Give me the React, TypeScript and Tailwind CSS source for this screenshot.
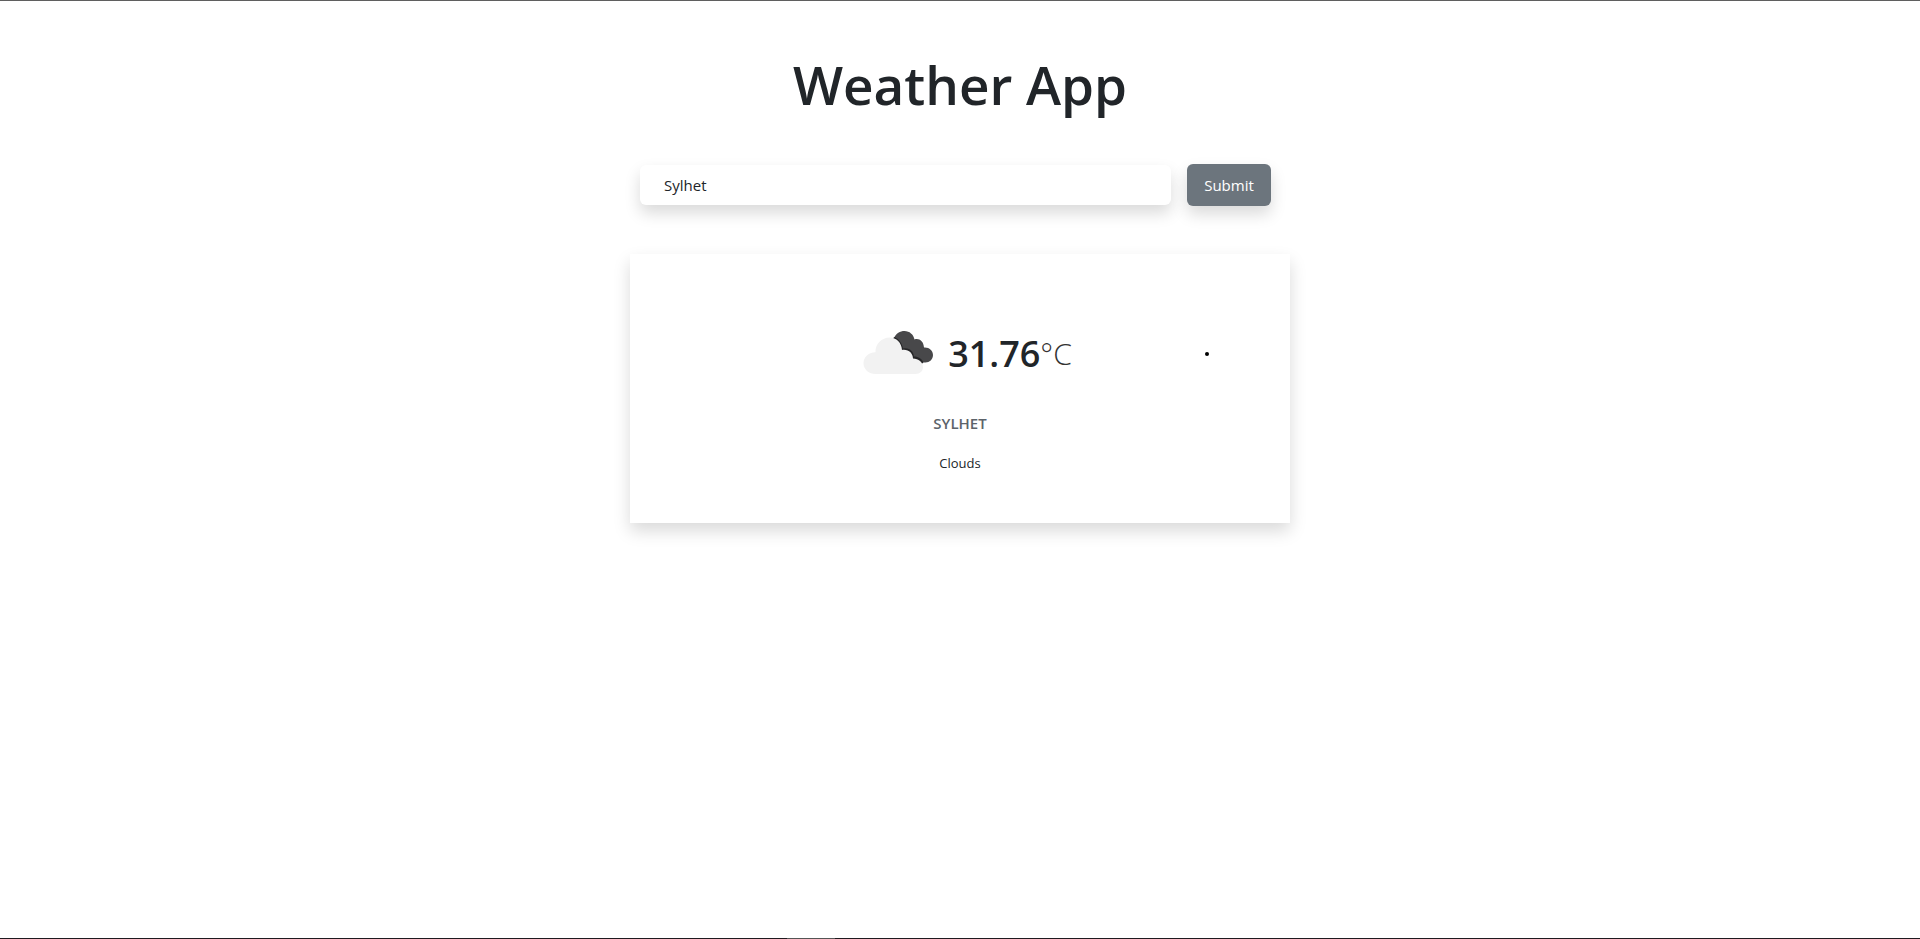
import { useState } from "react";
import type { FormEvent } from "react";

function CloudsIcon() {
  return (
    <svg viewBox="-1 0 100 100" className="size-[100px] shrink-0" role="img" aria-label="Clouds">
      <path
        d="M45 34C47 29.500 51 27 55.500 27C60.500 27 64.500 30.500 65.500 35.500C70 34 74.500 37 75 43.500C80 43 84 46.500 84 51C84 55.500 80.500 58.500 76.500 58.500C74.500 58.500 73 58 72 57.500L50 46Z"
        fill="#48484a"
      />
      <path
        d="M45 33C50 35 53 39 54 44.500C60 43 64.500 47 65 52.500C69.500 52.500 73 55 74.500 58.500L70 62L40 44Z"
        fill="#262628"
      />
      <path
        d="M26.500 70C20 70 14.500 65.200 14.500 59.500C14.500 53.500 19 48.500 26.500 48.300C26 40 33 33.500 40.500 33.500C47.500 33.500 52.500 38.500 53 46C59.500 45 64 49.500 64 54.500C69.500 54.500 74 58.500 74 63C74 67 71 70 66.500 70Z"
        fill="#f2f2f2"
      />
    </svg>
  );
}

export default function App() {
  const [city, setCity] = useState("Sylhet");
  const onSubmit = (event: FormEvent) => event.preventDefault();

  return (
    <div className="flex min-h-screen flex-col border-t border-[#5f5f5f] bg-white font-['Open_Sans','Noto_Sans',sans-serif] text-[#212529]">
      <main className="mx-auto w-full max-w-[660px] grow pt-12">
        <h1 className="text-center text-[53px] leading-[71px] font-semibold">Weather App</h1>

        <form onSubmit={onSubmit} className="mt-11 flex items-center gap-4 pr-[19px] pl-2.5">
          <input
            type="text"
            aria-label="City"
            value={city}
            onChange={(event) => setCity(event.target.value)}
            className="h-10 min-w-0 grow rounded-md bg-white px-6 text-[15px] shadow-[0_8px_16px_rgba(0,0,0,0.15)] outline-none"
          />
          <button
            type="submit"
            className="h-[42px] w-[84px] shrink-0 rounded-md bg-[#6c757d] text-[15px] text-white shadow-[0_8px_16px_rgba(0,0,0,0.15)]"
          >
            Submit
          </button>
        </form>

        <section className="mt-12 flex flex-col items-center bg-white pt-[50px] pb-12 shadow-[0_8px_16px_rgba(0,0,0,0.15)]">
          <div className="grid w-full grid-cols-[1fr_auto_1fr] items-center">
            <span />
            <div className="flex items-center">
              <CloudsIcon />
              <p className="flex items-center leading-12">
                <span className="text-[36px] font-semibold">31.76</span>
                <span className="text-[30px] font-light text-[#333333]">°C</span>
              </p>
            </div>
            <span className="ml-[133px] size-1 rounded-full bg-black" />
          </div>
          <h2 className="mt-[7px] text-[15px] leading-6 font-semibold text-[#5c636a] uppercase">{city}</h2>
          <p className="mt-4 text-[13px] leading-6">Clouds</p>
        </section>
      </main>
      <footer className="flex h-px bg-[#1f1a1f]">
        <span className="ml-[41%] w-12 bg-[#555555]" />
      </footer>
    </div>
  );
}
